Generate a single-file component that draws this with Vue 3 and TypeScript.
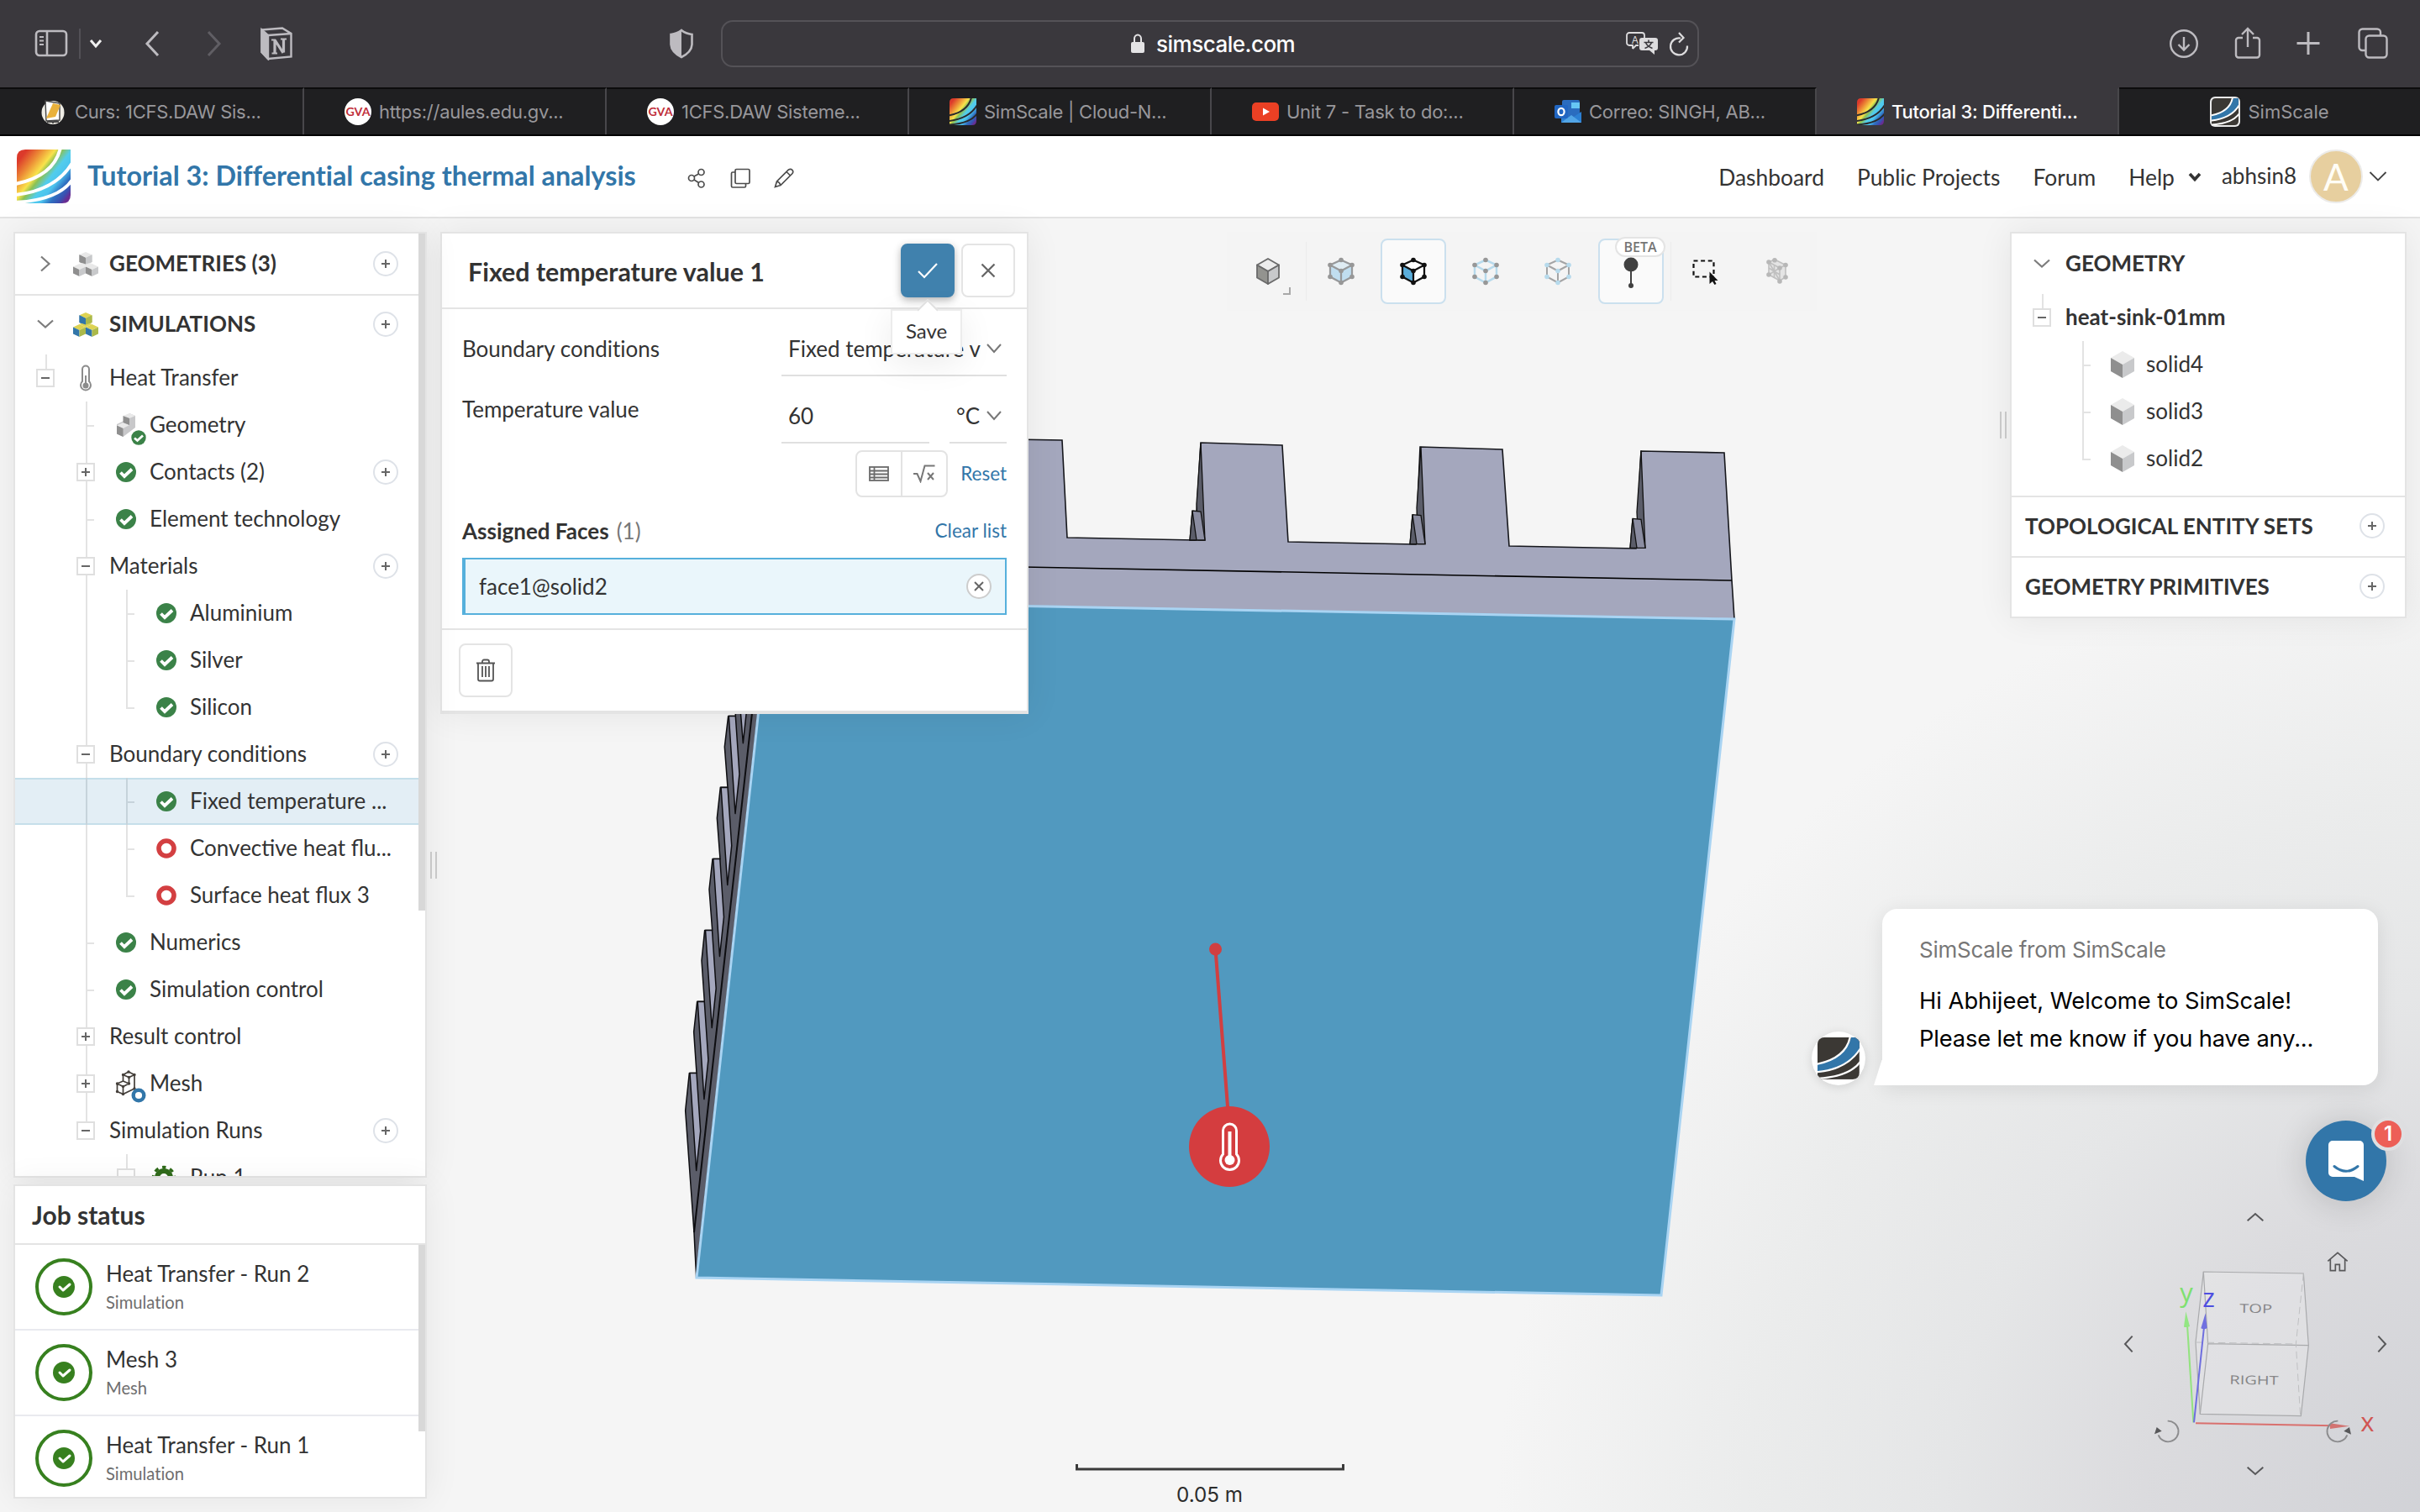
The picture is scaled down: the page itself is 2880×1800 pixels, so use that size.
<script setup lang="ts">
type Cell = '' | 'v' | 't' | 'e' | 'minus' | 'plus' | 'minus-end'

interface TreeRow {
  label: string
  cells: Cell[]
  icon?: string
  add?: boolean
  selected?: boolean
  ligatures?: boolean
}

interface Tab {
  title: string
  icon: string
  active?: boolean
  centered?: boolean
}

const tabs: Tab[] = [
  { title: 'Curs: 1CFS.DAW Sis...', icon: 'moodle' },
  { title: 'https://aules.edu.gv...', icon: 'gva' },
  { title: '1CFS.DAW Sisteme...', icon: 'gva' },
  { title: 'SimScale | Cloud-N...', icon: 'logo-tab' },
  { title: 'Unit 7 - Task to do:...', icon: 'youtube' },
  { title: 'Correo: SINGH, AB...', icon: 'outlook' },
  { title: 'Tutorial 3: Differenti...', icon: 'logo-tab', active: true },
  { title: 'SimScale', icon: 'logo-dark', centered: true },
]

const tree: TreeRow[] = [
  { label: 'Heat Transfer', cells: ['minus-end'], icon: 'thermo' },
  { label: 'Geometry', cells: ['', 't'], icon: 'geometry' },
  { label: 'Contacts (2)', cells: ['', 'plus'], icon: 'check', add: true },
  { label: 'Element technology', cells: ['', 't'], icon: 'check' },
  { label: 'Materials', cells: ['', 'minus'], add: true },
  { label: 'Aluminium', cells: ['', 'v', 't'], icon: 'check' },
  { label: 'Silver', cells: ['', 'v', 't'], icon: 'check' },
  { label: 'Silicon', cells: ['', 'v', 'e'], icon: 'check' },
  { label: 'Boundary conditions', cells: ['', 'minus'], add: true },
  { label: 'Fixed temperature ...', cells: ['', 'v', 't'], icon: 'check', selected: true },
  { label: 'Convective heat flu...', cells: ['', 'v', 't'], icon: 'open', ligatures: true },
  { label: 'Surface heat flux 3', cells: ['', 'v', 'e'], icon: 'open', ligatures: true },
  { label: 'Numerics', cells: ['', 't'], icon: 'check' },
  { label: 'Simulation control', cells: ['', 't'], icon: 'check' },
  { label: 'Result control', cells: ['', 'plus'] },
  { label: 'Mesh', cells: ['', 'plus'], icon: 'mesh' },
  { label: 'Simulation Runs', cells: ['', 'minus-end'], add: true },
  { label: 'Run 1', cells: ['', '', 'minus-end'], icon: 'gear' },
]

const solids: TreeRow[] = [
  { label: 'solid4', cells: ['', 't'], icon: 'solid' },
  { label: 'solid3', cells: ['', 't'], icon: 'solid' },
  { label: 'solid2', cells: ['', 'e'], icon: 'solid' },
]

const jobs = [
  { name: 'Heat Transfer - Run 2', kind: 'Simulation' },
  { name: 'Mesh 3', kind: 'Mesh' },
  { name: 'Heat Transfer - Run 1', kind: 'Simulation' },
]

const fins = [0, 1, 2, 3, 4, 5]
const nodes = [[32, 4], [58, 16], [58, 44], [32, 58], [6, 44], [6, 16], [32, 30]]
</script>

<template>
  <div class="screen">
    <svg class="defs" width="0" height="0" aria-hidden="true">
      <defs>
        <linearGradient id="rainbow" x1="0" y1="0.25" x2="0.95" y2="1">
          <stop offset="0" stop-color="#dc3a2b" />
          <stop offset="0.17" stop-color="#ec8a35" />
          <stop offset="0.34" stop-color="#f9e34b" />
          <stop offset="0.42" stop-color="#8cc152" />
          <stop offset="0.54" stop-color="#52cdec" />
          <stop offset="0.66" stop-color="#4cc3ee" />
          <stop offset="0.78" stop-color="#2f6fc0" />
          <stop offset="0.88" stop-color="#3a4fb0" />
          <stop offset="0.95" stop-color="#6a2c91" />
        </linearGradient>
        <radialGradient id="backdrop" gradientUnits="userSpaceOnUse" cx="2960" cy="1830" r="1180">
          <stop offset="0" stop-color="#cfd0d5" />
          <stop offset="0.35" stop-color="#dbdbde" />
          <stop offset="0.55" stop-color="#e5e6e7" />
          <stop offset="0.75" stop-color="#ebecec" />
          <stop offset="1" stop-color="#f5f5f5" />
        </radialGradient>
        <clipPath id="logo-clip"><path d="M10 0H64V54Q64 64 54 64H0V10Q0 0 10 0Z" /></clipPath>
      </defs>
      <symbol id="logo" viewBox="0 0 64 64">
        <g clip-path="url(#logo-clip)">
          <rect width="64" height="64" fill="url(#rainbow)" />
          <path d="M52 -2Q44 32 -2 41M66 16Q46 49 -2 54M66 36Q50 60 -2 63" fill="none" stroke="#fff" stroke-width="4" />
        </g>
      </symbol>
      <symbol id="logo-tab" viewBox="0 0 64 64">
        <g clip-path="url(#logo-clip)">
          <rect width="64" height="64" fill="url(#rainbow)" />
          <path d="M52 -2Q44 32 -2 41M66 16Q46 49 -2 54M66 36Q50 60 -2 63" fill="none" stroke="#2a2a2d" stroke-width="4" />
        </g>
      </symbol>
      <symbol id="logo-dark" viewBox="0 0 72 72">
        <rect width="72" height="72" rx="12" fill="#e8e8e8" />
        <g transform="translate(4 4)" clip-path="url(#logo-clip)">
          <rect width="64" height="64" fill="#3b3834" />
          <path d="M52 -2Q44 32 -2 41V54Q46 49 66 16V-2Z" fill="#3276a9" />
          <path d="M50 -2Q44 32 -2 41M66 16Q46 49 -2 53M66 36Q50 60 -2 63" fill="none" stroke="#fff" stroke-width="4" />
        </g>
      </symbol>
      <symbol id="moodle" viewBox="0 0 32 32">
        <ellipse cx="15" cy="17" rx="13.500" ry="14" fill="#eeece4" />
        <path d="M6 3L23 6V26L7 27Z" fill="#fff" stroke="#444" stroke-width="1.400" />
        <path d="M15 6L24 8L18 22L7 24Z" fill="#e9b13b" />
        <path d="M8 28h14M15 26v4" stroke="#4a4a4a" stroke-width="2" />
      </symbol>
      <symbol id="youtube" viewBox="0 0 32 32">
        <rect x="0" y="5" width="32" height="22" rx="5" fill="#eb4024" />
        <path d="M13 11.500V20.500L21 16Z" fill="#fff" />
      </symbol>
      <symbol id="outlook" viewBox="0 0 32 32">
        <rect x="9" y="2" width="21" height="20" rx="2" fill="#2a6cbf" />
        <rect x="20" y="5" width="10" height="7" fill="#66c6f4" />
        <path d="M8 17L20 24L32 16V29H8Z" fill="#2b7fd3" />
        <path d="M8 29L20 20L32 29Z" fill="#52a5e6" />
        <rect x="0" y="8" width="16" height="16" rx="2" fill="#2166c2" />
        <ellipse cx="8" cy="16" rx="3.600" ry="4.200" fill="none" stroke="#fff" stroke-width="2.200" />
      </symbol>

      <symbol id="cubes" viewBox="0 0 30 29">
        <path d="M15 0L22.500 3.200L15 7L7.500 3.200ZM7.500 14L15 17.500L7.500 21L0 17.500ZM22.500 14L30 17.500L22.500 21L15 17.500Z" fill="var(--top)" />
        <path d="M7.500 3.200L15 7V15L7.500 12ZM0 17.500L7.500 21V29L0 25.500ZM15 17.500L22.500 21V29L15 25.500Z" fill="var(--left)" />
        <path d="M22.500 3.200L15 7V15L22.500 12ZM15 17.500L7.500 21V29L15 25.500ZM30 17.500L22.500 21V29L30 25.500Z" fill="var(--right)" />
        <path d="M7.500 14L15 11L22.500 14L15 17.500Z" fill="var(--top)" />
        <path d="M7.500 3.200L15 7V14.500L7.500 12Z" fill="var(--left)" />
        <path d="M22.500 3.200L15 7V14.500L22.500 12Z" fill="var(--right)" />
      </symbol>
      <symbol id="thermo" viewBox="0 0 48 56">
        <path d="M20 32V17.500a4 4 0 0 1 8 0V32a6 6 0 1 1-8 0Z" fill="none" stroke="#8b8b8b" stroke-width="2" />
        <path d="M24 25V36" stroke="#8b8b8b" stroke-width="2" />
        <circle cx="24" cy="37" r="3.500" fill="#8b8b8b" />
      </symbol>
      <symbol id="check" viewBox="0 0 48 56">
        <circle cx="24" cy="28" r="12" fill="#3b8248" />
        <path d="M17.500 28.500L22 33L31 24.500" fill="none" stroke="#fff" stroke-width="3.800" />
      </symbol>
      <symbol id="open" viewBox="0 0 48 56">
        <circle cx="24" cy="28" r="9" fill="#fff" stroke="#d33f41" stroke-width="5.600" />
      </symbol>
      <symbol id="geometry" viewBox="0 0 48 56">
        <path d="M13 27L20.500 23.500L28 14L35 17V31L20.500 42L13 38.500Z" fill="#c8c8ca" />
        <path d="M28 14L35 17L28 20L20.500 17ZM20.500 25L28 28L20.500 32L13 28.500Z" fill="#e9e9e9" />
        <path d="M20.500 17L28 20V28L20.500 25ZM13 28.500L20.500 32V42L13 38.500Z" fill="#8f8f8f" />
        <circle cx="39" cy="43" r="8.700" fill="#3b8248" />
        <path d="M34 43.500L37.500 46.500L44 40.500" fill="none" stroke="#fff" stroke-width="2.800" />
      </symbol>
      <symbol id="mesh" viewBox="0 0 48 56">
        <path d="M20.500 17.500L27 14L34 17.500V34L20.500 40.500L13.500 37.500V28L20.500 25ZM20.500 17.500L27.500 20.500L34 17.500M27.500 20.500V28L20.500 31.500L13.500 28M20.500 31.500V40.500M20.500 25L27.500 28" fill="none" stroke="#443f3a" stroke-width="1.700" />
        <path d="M20.500 17.500h0M27 14h0M34 17.500h0M34 34h0M20.500 40.500h0M13.500 37.500h0M13.500 28h0M27.500 28h0M27.500 20.500h0M20.500 31.500h0" stroke="#443f3a" stroke-width="3.400" stroke-linecap="round" />
        <circle cx="39" cy="42" r="6.300" fill="#fff" stroke="#3276a9" stroke-width="4.400" />
      </symbol>
      <symbol id="gear" viewBox="0 0 48 56">
        <circle cx="21" cy="28" r="8" fill="none" stroke="#2f6b1a" stroke-width="6" />
        <circle cx="21" cy="28" r="12.500" fill="none" stroke="#2f6b1a" stroke-width="3.500" stroke-dasharray="4.900 4.917" stroke-dashoffset="2.450" transform="rotate(-90 21 28)" />
      </symbol>
      <symbol id="solid" viewBox="0 0 48 56">
        <path d="M24 12L38 20L24 28L10 20Z" fill="#ebebeb" />
        <path d="M10 20L24 28V44L10 36Z" fill="#8f8f8f" />
        <path d="M38 20L24 28V44L38 36Z" fill="#c8c9cb" />
      </symbol>
    </svg>

    <div class="browser-bar">
      <div class="bar-left">
        <svg class="i-sidebar" width="40" height="34" viewBox="0 0 40 34" fill="none" stroke="#bdbbc0" stroke-width="2.600">
          <rect x="2" y="2" width="36" height="29" rx="4" />
          <path d="M15 2V31" /><path d="M6 9h5M6 13.500h5M6 18h5" stroke-width="2" />
        </svg>
        <span class="bar-sep"></span>
        <svg class="i-drop" width="16" height="12" viewBox="0 0 16 12" fill="none" stroke="#f0f0f0" stroke-width="3"><path d="M2 2L8 9L14 2" /></svg>
        <svg class="i-back" width="20" height="32" viewBox="0 0 20 32" fill="none" stroke="#bdbbc0" stroke-width="3"><path d="M17 2L4 16L17 30" /></svg>
        <svg class="i-fwd" width="20" height="32" viewBox="0 0 20 32" fill="none" stroke="#605e64" stroke-width="3"><path d="M3 2L16 16L3 30" /></svg>
        <svg class="i-notion" width="38" height="40" viewBox="0 0 38 40" fill="none" stroke="#bdbbc0" stroke-width="2.400">
          <path d="M1.500 3.500L26 1.500L36.500 8V35.500L9 38L1.500 30Z" />
          <path d="M1.500 3.500L9 10V38L1.500 30Z" fill="#bdbbc0" />
          <path d="M9 10L36.500 8" />
          <path d="M17 15.500V31.500M17 15.500L27 31M27.500 14.500V30.500" stroke-width="3.200" />
          <path d="M13 15.500H18M13.500 31.500H20M24 14.500H31" stroke-width="1.800" />
        </svg>
      </div>
      <svg class="i-shield" width="30" height="36" viewBox="0 0 30 36">
        <path d="M15 2Q20 6 27.500 7V19Q27 28 15 34Q3 28 2.500 19V7Q10 6 15 2Z" fill="none" stroke="#bdbbc0" stroke-width="2.600" />
        <path d="M15 2V34Q3 28 2.500 19V7Q10 6 15 2Z" fill="#bdbbc0" />
      </svg>
      <div class="address">
        <div class="address-text">
          <svg width="18" height="26" viewBox="0 0 18 26"><path d="M5 11V7a4 4.500 0 0 1 8 0V11" fill="none" stroke="#e4e3e5" stroke-width="2" /><rect x="1" y="11" width="16" height="13" rx="2" fill="#e4e3e5" /></svg>
          <span>simscale.com</span>
        </div>
        <svg class="i-translate" width="40" height="30" viewBox="0 0 40 30">
          <path d="M4 2H19a3 3 0 0 1 3 3V9M8 21V17H4a3 3 0 0 1-3-3V5a3 3 0 0 1 3-3M8 21l4-4h3" fill="none" stroke="#dddcde" stroke-width="1.800" />
          <text x="11" y="14.500" text-anchor="middle" font-family="Inter, sans-serif" font-size="12" fill="#dddcde">A</text>
          <path d="M19 8H35a3 3 0 0 1 3 3V20a3 3 0 0 1-3 3H34V28L28 23H19a3 3 0 0 1-3-3V11a3 3 0 0 1 3-3Z" fill="#dddcde" />
          <path d="M27 10.500V13M21.500 13.500H32.500M30.500 13.500Q29 18 22.500 20.500M23.500 13.500Q25 18 31.500 20.500" fill="none" stroke="#3a383d" stroke-width="1.600" />
        </svg>
        <svg class="i-reload" width="24" height="30" viewBox="0 0 24 30" fill="none" stroke="#dddcde" stroke-width="2.200"><path d="M14 8.500A10 10 0 1 0 22 17.500" /><path d="M12 2L17.500 8L12 13.500" /></svg>
      </div>
      <div class="bar-right">
        <svg width="36" height="40" viewBox="0 0 36 40" fill="none" stroke="#bdbbc0" stroke-width="2.400"><circle cx="18" cy="20" r="15.800" /><path d="M18 12V27M11.500 21L18 27.500L24.500 21" /></svg>
        <svg width="32" height="40" viewBox="0 0 32 40" fill="none" stroke="#bdbbc0" stroke-width="2.400"><path d="M10 13H5a3 3 0 0 0-3 3V33.500a3 3 0 0 0 3 3H27a3 3 0 0 0 3-3V16a3 3 0 0 0-3-3H22M16 24V3M9 9L16 2L23 9" /></svg>
        <svg width="28" height="40" viewBox="0 0 28 40" fill="none" stroke="#bdbbc0" stroke-width="3"><path d="M14 6V33M.5 19.500H27.500" /></svg>
        <svg class="i-tabs" width="36" height="40" viewBox="0 0 36 40" fill="none" stroke="#bdbbc0" stroke-width="2.400"><rect x="9.500" y="10.500" width="25" height="26" rx="4" /><path d="M9.500 28H5.500a4 4 0 0 1-4-4V6.500a4 4 0 0 1 4-4H23a4 4 0 0 1 4 4V10.500" /></svg>
      </div>
    </div>

    <div class="tabs">
      <div v-for="tab in tabs" :key="tab.title" class="tab" :class="{ active: tab.active, centered: tab.centered }">
        <svg v-if="tab.icon === 'gva'" class="favicon" viewBox="0 0 32 32">
          <circle cx="16" cy="16" r="16" fill="#fff" />
          <text x="1.500" y="21" font-family="Lato, sans-serif" font-weight="700" font-size="14" letter-spacing="0" fill="#bf2f3b" textLength="29" lengthAdjust="spacingAndGlyphs">GVA</text>
        </svg>
        <svg v-else class="favicon"><use :href="'#' + tab.icon" /></svg>
        <span>{{ tab.title }}</span>
      </div>
    </div>

    <header class="app-header">
      <svg class="app-logo" width="64" height="64"><use href="#logo" /></svg>
      <h1>Tutorial 3: Differential casing thermal analysis</h1>
      <div class="title-actions">
        <svg width="24" height="24" viewBox="0 0 24 24" fill="none" stroke="#4c4c4c" stroke-width="1.700"><circle cx="6" cy="12" r="3.500" /><circle cx="17.500" cy="5" r="3.500" /><circle cx="17.500" cy="19.500" r="3.500" /><path d="M9 10L14.500 7M9 14L14.500 17.500" /></svg>
        <svg width="24" height="24" viewBox="0 0 24 24" fill="none" stroke="#4c4c4c" stroke-width="1.700"><rect x="6" y="1.500" width="17" height="17" rx="1.500" /><path d="M6 5H3A1.500 1.500 0 0 0 1.500 6.500V21.500A1.500 1.500 0 0 0 3 23H17A1.500 1.500 0 0 0 18.500 21.500V18.500" /></svg>
        <svg width="24" height="24" viewBox="0 0 24 24" fill="none" stroke="#4c4c4c" stroke-width="1.700"><path d="M1.500 22.500L3.500 16L17.500 2Q20 .5 22 2.500Q23.500 4.500 22 6.500L8 20.500ZM15 4.500L19.500 9M3.500 16Q6.500 16.500 8 20.500" /></svg>
      </div>
      <nav>
        <span>Dashboard</span><span>Public Projects</span><span>Forum</span>
        <span class="help">Help <svg width="16" height="12" viewBox="0 0 16 12" fill="none" stroke="#333" stroke-width="3.600"><path d="M2 2L8 8.500L14 2" /></svg></span>
      </nav>
      <div class="user">
        <span class="user-name">abhsin8</span>
        <span class="avatar">A</span>
        <svg width="22" height="14" viewBox="0 0 22 14" fill="none" stroke="#444" stroke-width="1.800"><path d="M1.500 2L11 11.500L20.500 2" /></svg>
      </div>
    </header>

    <main class="workspace">
      <svg class="viewport" viewBox="0 260 2880 1540" width="2880" height="1540">
        <rect y="260" width="2880" height="1540" fill="#f5f5f5" />
        <rect y="260" width="2880" height="1540" fill="url(#backdrop)" />

        <!-- heat sink body -->
        <path d="M900 518L1264 524L1270 640L1422 643L1429 527L1526 530L1533 645L1685 648L1690 532L1788 535L1796 650L1947 653L1953 537L2052 539L2061 691L2064 737L900 718Z" fill="#a4a7bd" stroke="#16171c" stroke-width="1.600" />
        <path d="M900 669L2061 691" stroke="#000" stroke-width="1.600" />
        <g v-for="x in [0, 262, 524]" :key="x" :transform="`translate(${x} ${x * 0.018})`" stroke="#111" stroke-width="1.300">
          <path d="M1429 527L1434 643H1426L1424 600Z" fill="#5b5d69" />
          <path d="M1419 608L1429 609L1434 643L1416 643Z" fill="#8b8da1" />
          <path d="M1419 608L1424 643H1416Z" fill="#5b5d69" />
        </g>

        <!-- fins along the left edge -->
        <g transform="translate(780 840) scale(0.33333 0.44643)" stroke="#0d0d10" stroke-width="1.500" stroke-linejoin="round">
          <path vector-effect="non-scaling-stroke" fill="#5b5d69" d="M285 -20L286 28H260L247 110L258 218H232L220 300L231 409H204L192 490L203 599H176L165 680L175 789H149L137 870L147 980H121L107 1080L138 1405L146 1525L372 -20Z" />
          <g v-for="n in fins" :key="n" :transform="`translate(${n * 27.8} ${n * -190.4})`">
            <path vector-effect="non-scaling-stroke" fill="#a4a7bd" d="M123 980H147L161 1135L146 1240Z" />
          </g>
          <path vector-effect="non-scaling-stroke" fill="#a4a7bd" d="M300 -20H320L326 10L313 100Z" />
          <path vector-effect="non-scaling-stroke" fill="none" stroke-width="2" d="M138 1405L351 -20" />
        </g>

        <path d="M917 716L2064 737L1977 1542L829 1521Z" fill="#5199bf" stroke="#a9d4f3" stroke-width="3" />

        <!-- temperature probe -->
        <path d="M1446.500 1130L1462 1330" stroke="#d13f41" stroke-width="4" />
        <circle cx="1446.500" cy="1130" r="7.500" fill="#d13f41" />
        <circle cx="1463" cy="1365" r="48" fill="#d43d3f" />
        <path d="M1455.500 1374V1346a8 8 0 0 1 16 0V1374a11 11 0 1 1-16 0Z" fill="none" stroke="#fff" stroke-width="3" />
        <path d="M1463.500 1347V1380" stroke="#fff" stroke-width="4" />
        <circle cx="1463.500" cy="1381" r="6" fill="#fff" />

        <!-- scale bar -->
        <path d="M1281.500 1743V1749H1598.500V1743" fill="none" stroke="#3a3a3a" stroke-width="3" />
        <text x="1439.500" y="1788" text-anchor="middle" font-family="Inter, sans-serif" font-size="24.200" fill="#2c2c2c">0.05 m</text>

        <!-- orientation cube -->
        <g transform="translate(2480 1400) scale(0.33333)" fill="none" stroke-width="3.600">
          <path d="M427 342L784 348L802 605L775 857L415 850L399 594Z" fill="#ffffff" fill-opacity="0.180" stroke="#a9aaac" />
          <path d="M427 342L443 599L415 850M443 599L802 605" stroke="#a9aaac" />
          <path d="M784 348L757 600L773 857M399 594L757 600" stroke="#bfc0c2" stroke-dasharray="26 14" stroke-width="3" />
          <path d="M391 880L369 530" stroke="#93e37f" stroke-width="6" />
          <path d="M364 484L378 537Q367 542 357 539Z" fill="#93e683" />
          <path d="M393 880L429 540" stroke="#6e6edf" stroke-width="6" />
          <path d="M434 490L440 543Q430 550 418 544Z" fill="#7070e0" />
          <path d="M399 883L890 892" stroke="#d9706e" stroke-width="6" />
          <path d="M948 893L879 903V883Z" fill="#d27371" />
          <g font-family="'Open Sans', sans-serif" font-size="93" font-weight="500" stroke="none">
            <text x="343" y="450" fill="#7fe070">y</text>
            <text x="424" y="468" fill="#4e4ee0">z</text>
            <text x="988" y="911" fill="#d05552">x</text>
          </g>
          <g font-family="'Open Sans', sans-serif" fill="#858587" stroke="none">
            <text transform="translate(556 488) rotate(1)" font-size="44" textLength="116" lengthAdjust="spacingAndGlyphs">TOP</text>
            <text transform="translate(520 743) rotate(1)" font-size="44" textLength="175" lengthAdjust="spacingAndGlyphs">RIGHT</text>
          </g>
          <g stroke="#58585a" stroke-width="6">
            <path d="M584 160L612 135L640 160M584 1040L612 1065L640 1040M173 572L147 600L173 628M1051 572L1077 600L1051 628" />
            <path d="M871 304L906 274L941 304M880 298V338H898V316H913V338H932V298" stroke-width="5" />
          </g>
          <path d="M299 875A37 37 0 1 1 266 925M907 875A37 37 0 1 0 940 925" stroke="#8c8c8e" stroke-width="5.500" />
          <path d="M260 897L278 911L252 922ZM948 897L928 911L954 923Z" fill="#58585a" />
        </g>
      </svg>

      <div class="overlay">
        <div class="left-column">
          <section class="panel tree-panel">
            <div class="scroll-area">
              <div class="tree-head first">
                <span class="cell"><svg width="14" height="20" viewBox="0 0 14 20" fill="none" stroke="#7d7d7d" stroke-width="2.200"><path d="M2 1.500L11.500 10L2 18.500" /></svg></span>
                <span class="cell"><svg class="cubes gray" width="30" height="29"><use href="#cubes" /></svg></span>
                <b>GEOMETRIES (3)</b><span class="add"></span>
              </div>
              <div class="tree-head">
                <span class="cell"><svg width="20" height="12" viewBox="0 0 20 12" fill="none" stroke="#7d7d7d" stroke-width="2.200"><path d="M1 1.500L10 9.500L19 1.500" /></svg></span>
                <span class="cell"><svg class="cubes vivid" width="30" height="29"><use href="#cubes" /></svg></span>
                <b>SIMULATIONS</b><span class="add"></span>
              </div>
              <div v-for="row in tree" :key="row.label" class="tree-row" :class="{ selected: row.selected }">
                <span v-for="(c, i) in row.cells" :key="i" class="cell" :class="c && 'g-' + c"><i v-if="c === 'plus' || c.startsWith('minus')" class="toggle" :class="c"></i></span>
                <svg v-if="row.icon" class="row-icon"><use :href="'#' + row.icon" /></svg>
                <span class="row-label" :class="{ ligatures: row.ligatures }">{{ row.label }}</span>
                <span v-if="row.add" class="add"></span>
              </div>
            </div>
            <span class="scrollbar tree-bar"></span>
          </section>

          <section class="panel jobs-panel">
            <h2>Job status</h2>
            <div v-for="job in jobs" :key="job.name" class="job">
              <svg width="68" height="68" viewBox="0 0 68 68">
                <circle cx="34" cy="34" r="32" fill="none" stroke="#37801f" stroke-width="4" />
                <circle cx="34" cy="34" r="13" fill="#37801f" />
                <path d="M29 34L33 38L41 31" fill="none" stroke="#fff" stroke-width="3" stroke-linecap="round" stroke-linejoin="round" />
              </svg>
              <div><p>{{ job.name }}</p><small>{{ job.kind }}</small></div>
            </div>
            <span class="scrollbar job-bar"></span>
          </section>
        </div>
        <span class="grip left-grip"></span>

        <section class="panel form-panel">
          <div class="form-head">
            <h2>Fixed temperature value 1</h2>
            <button class="save"><svg width="26" height="22" viewBox="0 0 26 22" fill="none" stroke="#fff" stroke-width="2.200"><path d="M2 12L9 19L24 3" /></svg>
              <span class="tooltip">Save</span>
            </button>
            <button class="close"><svg width="18" height="18" viewBox="0 0 18 18" fill="none" stroke="#666" stroke-width="2.300"><path d="M1.500 1.500L16.500 16.500M16.500 1.500L1.500 16.500" /></svg></button>
          </div>
          <div class="form-body">
            <div class="field">
              <label class="low">Boundary conditions</label>
              <div class="input wide low"><span class="clip">Fixed temperature v</span><svg class="chev" viewBox="0 0 18 12"><path d="M1 1L9 10L17 1" /></svg></div>
            </div>
            <div class="field">
              <label>Temperature value</label>
              <div class="input number">60</div>
              <div class="input unit"><span>°C</span><svg class="chev" viewBox="0 0 18 12"><path d="M1 1L9 10L17 1" /></svg></div>
            </div>
            <div class="tools">
              <div class="tool-group">
                <span><svg width="24" height="18" viewBox="0 0 24 18" fill="none" stroke="#6b6b6b" stroke-width="1.800"><rect x="1" y="1" width="22" height="16" /><path d="M1 5.500H23M1 9.500H23M1 13.500H23M6.500 1V17" /></svg></span>
                <span><svg width="26" height="22" viewBox="0 0 26 22" fill="none" stroke="#777" stroke-width="2"><path d="M0 11H4.500L8.500 20L13.500 1.500H25.500M17 10L24 18M24 10L17 18" /></svg></span>
              </div>
              <a>Reset</a>
            </div>
            <div class="assigned"><b>Assigned Faces</b><span>(1)</span><a>Clear list</a></div>
            <div class="face">face1@solid2<span class="face-x"><svg width="14" height="14" viewBox="0 0 14 14" fill="none" stroke="#666" stroke-width="2"><path d="M2 2L12 12M12 2L2 12" /></svg></span></div>
          </div>
          <div class="form-foot">
            <button><svg width="24" height="28" viewBox="0 0 24 28" fill="none" stroke="#555" stroke-width="1.800"><path d="M1 5.500H23M3 5.500V24.500a2 2 0 0 0 2 2H19a2 2 0 0 0 2-2V5.500M8 5V3.500a2 2 0 0 1 2-2H14a2 2 0 0 1 2 2V5M8 9V22M12 9V22M16 9V22" /></svg></button>
          </div>
        </section>

        <div class="toolbar">
          <span class="tool first">
            <svg width="28" height="32" viewBox="0 0 28 32" stroke="#6a6a6a" stroke-width="1.800" stroke-linejoin="round"><path d="M14 1L27 8.500L14 16L1 8.500Z" fill="#ececec" /><path d="M1 8.500L14 16V31L1 23.500Z" fill="#93938f" /><path d="M27 8.500L14 16V31L27 23.500Z" fill="#c8c9cb" /></svg>
            <i class="corner"></i>
          </span>
          <span class="sep"></span>
          <span class="tool"><svg width="32" height="34" viewBox="0 0 64 62"><path d="M32 4L58 16V44L32 58L6 44V16Z" fill="#c0def0" /><path d="M32 4L58 16L32 30L6 16Z" fill="#dfecf3" /><path d="M32 4L58 16V44L32 58L6 44V16ZM6 16L32 30L58 16M32 30V58" fill="none" stroke="#97999b" stroke-width="4.500" /><circle v-for="(n, i) in nodes" :key="i" :cx="n[0]" :cy="n[1]" r="5.600" fill="#979797" /></svg></span>
          <span class="tool on"><svg width="32" height="34" viewBox="0 0 64 62"><path d="M32 4L58 16V44L32 58L6 44V16Z" fill="#fff" /><path d="M6 16L32 30V58L6 44Z" fill="#5aaddb" /><path d="M32 4L58 16V44L32 58L6 44V16ZM6 16L32 30L58 16M32 30V58" fill="none" stroke="#111" stroke-width="4.500" /><circle v-for="(n, i) in nodes" :key="i" :cx="n[0]" :cy="n[1]" r="5.600" fill="#111" /></svg></span>
          <span class="tool"><svg width="32" height="34" viewBox="0 0 64 62"><path d="M32 4L58 16V44L32 58L6 44V16ZM6 16L32 30L58 16M32 30V58" fill="none" stroke="#b7daec" stroke-width="5" /><circle v-for="(n, i) in nodes" :key="i" :cx="n[0]" :cy="n[1]" r="5.600" fill="#979797" /></svg></span>
          <span class="tool"><svg width="32" height="34" viewBox="0 0 64 62"><path d="M32 4L58 16V44L32 58L6 44V16ZM6 16L32 30L58 16M32 30V58" fill="none" stroke="#a3a4a5" stroke-width="4" /><circle v-for="(n, i) in nodes" :key="i" :cx="n[0]" :cy="n[1]" r="5.600" fill="#b7daec" /></svg></span>
          <span class="tool on probe">
            <svg width="18" height="38" viewBox="0 0 18 38"><circle cx="9" cy="9" r="8.500" fill="#404040" /><path d="M9 15V34" stroke="#404040" stroke-width="2" /><circle cx="9" cy="34" r="3" fill="#404040" /></svg>
            <em>BETA</em>
          </span>
          <span class="sep late"></span>
          <span class="tool"><svg width="32" height="32" viewBox="0 0 32 32"><rect x="2.500" y="3.500" width="24" height="19" fill="none" stroke="#111" stroke-width="2.200" stroke-dasharray="5 3.600" /><path d="M21.500 16.500V31L25 28L27.500 32L29.500 31L27.500 27H31.500Z" fill="#111" /></svg></span>
          <span class="sep tail"></span>
          <span class="tool"><svg width="26" height="32" viewBox="0 0 26 32" fill="none" stroke="#c0c0c0" stroke-width="1.600"><path d="M3 5L10 2L23 8.500V23L16 27L3 20Z" fill="#e4e4e4" /><path d="M3 5L16 12V27M16 12L23 8.500M3 20L16 12M3 12L16 20M9.500 8V24M3 5L16 27" /><g fill="#b7b7b7" stroke="none"><circle cx="3" cy="5" r="2.800" /><circle cx="10" cy="2.800" r="2.800" /><circle cx="23" cy="8.500" r="2.800" /><circle cx="23" cy="23" r="2.800" /><circle cx="16" cy="28" r="2.800" /><circle cx="3" cy="20" r="2.800" /><circle cx="16" cy="12" r="2.800" /></g></svg></span>
        </div>

        <span class="grip right-grip"></span>
        <section class="panel scene-panel">
          <div class="scene-head"><span class="cell"><svg width="20" height="12" viewBox="0 0 20 12" fill="none" stroke="#7d7d7d" stroke-width="2.200"><path d="M1 1.500L10 9.500L19 1.500" /></svg></span><b>GEOMETRY</b></div>
          <div class="tree-row"><span class="cell g-minus-end"><i class="toggle minus"></i></span><b class="row-label">heat-sink-01mm</b></div>
          <div v-for="row in solids" :key="row.label" class="tree-row">
            <span v-for="(c, i) in row.cells" :key="i" class="cell" :class="c && 'g-' + c"></span>
            <svg class="row-icon"><use href="#solid" /></svg>
            <span class="row-label">{{ row.label }}</span>
          </div>
          <div class="scene-section gap"><b>TOPOLOGICAL ENTITY SETS</b><span class="add"></span></div>
          <div class="scene-section"><b>GEOMETRY PRIMITIVES</b><span class="add"></span></div>
        </section>
      </div>

      <div class="chat">
        <svg class="chat-avatar" width="64" height="64" viewBox="0 0 64 64">
          <circle cx="32" cy="32" r="32" fill="#fff" />
          <g transform="translate(7 7) scale(0.78)" clip-path="url(#logo-clip)">
            <rect width="64" height="64" fill="#3b3834" />
            <path d="M52 -2Q44 32 -2 41V54Q46 49 66 16V-2Z" fill="#3276a9" />
            <path d="M50 -2Q44 32 -2 41M66 16Q46 49 -2 53M66 36Q50 60 -2 63" fill="none" stroke="#fff" stroke-width="3" />
          </g>
        </svg>
        <div class="chat-card">
          <svg class="tail" width="20" height="30" viewBox="0 0 20 30"><path d="M9.500 0L0 30H20V0Z" fill="#fff" /></svg>
          <p class="from">SimScale from SimScale</p>
          <p class="msg first-line">Hi Abhijeet, Welcome to SimScale!</p>
          <p class="msg second-line">Please let me know if you have any...</p>
        </div>
      </div>
      <div class="launcher">
        <svg width="42" height="50" viewBox="0 0 42 50"><path d="M5 1H37a5 5 0 0 1 5 5V49L31 44H5a5 5 0 0 1-5-5V6A5 5 0 0 1 5 1Z" fill="#fff" /><path d="M7 31.500Q21 43 35 31.500" fill="none" stroke="#3276a9" stroke-width="3" stroke-linecap="round" /></svg>
        <span class="badge">1</span>
      </div>
    </main>
  </div>
</template>

<style>
html, body { margin: 0; background: #f5f5f5; }
</style>

<style scoped>
* { box-sizing: border-box; }
.screen { width: 2880px; height: 1800px; display: flex; flex-direction: column; overflow: hidden; font-family: Lato, sans-serif; font-size: 26px; color: #333; font-variant-ligatures: none; }
.ligatures { font-variant-ligatures: normal; }
.defs { position: absolute; }
svg { display: block; flex: none; }
p, h1, h2 { margin: 0; }

.browser-bar { height: 104px; flex: none; background: #3a383d; display: flex; align-items: center; }
.bar-left { width: 796px; display: flex; align-items: center; padding-left: 41px; }
.bar-sep { width: 2px; height: 36px; background: #525056; margin-left: 13px; }
.i-drop { margin-left: 10px; }
.i-back { margin-left: 49px; }
.i-fwd { margin-left: 54px; }
.i-notion { margin-left: 45px; }
.address { width: 1164px; height: 56px; margin-left: 32px; border: 2px solid #545257; border-radius: 14px; display: flex; align-items: center; }
.address-text { display: flex; align-items: center; gap: 13px; margin-left: 485px; color: #fff; font: 500 26px Inter, sans-serif; letter-spacing: -0.5px; }
.i-translate { margin-left: auto; }
.i-reload { margin: 0 10px 0 11px; }
.bar-right { display: flex; align-items: center; gap: 42px; margin: 0 38px 0 auto; }
.i-tabs { margin-left: 3px; }

.tabs { height: 58px; flex: none; display: flex; background: #1f1f21; border-bottom: 2px solid #000; }
.tab { width: 360px; display: flex; align-items: center; gap: 9px; padding-left: 48px; border-top: 2px solid #0c0c0d; border-right: 2px solid #48474b; color: #98979b; font: 400 22px Inter, sans-serif; letter-spacing: -0.25px; white-space: nowrap; }
.tab:first-child { width: 362px; }
.tab.active { background: #3a383d; border-top-color: #3a383d; color: #fff; font-weight: 500; letter-spacing: -0.25px; }
.tab.centered { flex: 1; padding: 0; justify-content: center; border-right: 0; letter-spacing: 0; }
.favicon { width: 32px; height: 32px; }
.centered .favicon { width: 36px; height: 36px; }

.app-header { height: 98px; flex: none; background: #fff; border-bottom: 2px solid #e3e3e3; display: flex; align-items: center; padding: 0 39px 0 20px; }
h1 { width: 655px; margin-left: 20px; font-size: 32.300px; font-weight: 700; color: #3276a9; line-height: 40px; padding-bottom: 2px; white-space: nowrap; }
.title-actions { display: flex; gap: 28px; margin-left: 58px; padding-top: 3px; }
nav { display: flex; gap: 39px; margin-left: auto; padding-top: 2px; font-size: 26.400px; }
.help { display: flex; align-items: center; gap: 16px; }
.user { display: flex; align-items: center; margin-left: 24px; }
.user-name { padding-bottom: 2px; }
.avatar { width: 64px; height: 64px; margin: 0 7px 0 15px; border: 2px solid #ecebe9; border-radius: 50%; background: #e7cf9f; color: #fffdf6; font-size: 44px; line-height: 60px; text-align: center; }

.workspace { position: relative; height: 1540px; }
.viewport { position: absolute; inset: 0; }
.overlay { position: relative; display: flex; align-items: flex-start; padding: 16px 16px 0; }
.panel { background: #fff; border: 2px solid #e4e4e4; box-shadow: 0 0 40px rgba(0, 0, 0, 0.07); }
.left-column { width: 492px; display: flex; flex-direction: column; gap: 8px; }
.tree-panel { position: relative; height: 1126px; overflow: hidden; }
.tree-head { display: flex; align-items: center; height: 70px; padding: 0 32px 2px 12px; }
.tree-head.first { height: 74px; border-bottom: 2px solid #e4e4e4; padding-bottom: 0; }
.tree-head b { margin-left: 4px; padding-bottom: 2px; }
.cell { position: relative; width: 48px; align-self: stretch; flex: none; display: flex; align-items: center; justify-content: center; }
.cubes.gray { --top: #e8e8e8; --left: #8f8f8f; --right: #c8c9cb; }
.cubes.vivid { --top: #ddd353; --left: #3276a9; --right: #abb94a; }
.tree-row { display: flex; align-items: center; height: 56px; padding: 0 32px 0 12px; }
.tree-row.selected { background: linear-gradient(#c5dfea, #c5dfea) top / 100% 2px no-repeat, linear-gradient(#c5dfea, #c5dfea) bottom / 100% 2px no-repeat, #e3eef5; }
.g-v::before, .g-t::before, .g-plus::before, .g-minus::before { content: ''; position: absolute; left: 24px; top: 0; bottom: 0; width: 2px; background: #e3e3e3; }
.g-e::before, .g-minus-end::before { content: ''; position: absolute; left: 24px; top: 0; height: 30px; width: 2px; background: #e3e3e3; }
.g-t::after, .g-e::after { content: ''; position: absolute; left: 26px; top: 28px; width: 8px; height: 2px; background: #e3e3e3; }
.selected .cell::before, .selected .cell::after { background: #c6d3db; }
.toggle { position: relative; width: 22px; height: 22px; border: 2px solid #dfdfdf; background: linear-gradient(#666, #666) center / 10px 2px no-repeat, #fff; }
.toggle.plus { background: linear-gradient(#666, #666) center / 10px 2px no-repeat, linear-gradient(#666, #666) center / 2px 10px no-repeat, #fff; }
.row-icon { width: 48px; height: 56px; }
.row-label { margin-left: 4px; padding-bottom: 2px; white-space: nowrap; }
.add { width: 30px; height: 30px; margin-left: auto; flex: none; border: 2px solid #dee2e8; border-radius: 50%; background: linear-gradient(#666, #666) center / 10px 2px no-repeat, linear-gradient(#666, #666) center / 2px 10px no-repeat, #fff; }
.scrollbar { position: absolute; right: 0; width: 8px; background: #d8d8d8; }
.tree-bar { top: 0; height: 806px; }

.jobs-panel { position: relative; height: 374px; overflow: hidden; }
.jobs-panel h2 { height: 70px; padding: 0 20px 0; border-bottom: 2px solid #e4e4e4; font-size: 30px; line-height: 68px; }
.job { display: flex; align-items: center; gap: 16px; height: 102px; padding-left: 24px; border-bottom: 2px solid #e9eaef; }
.job p { line-height: 34px; margin-top: -1px; }
.job small { display: block; font-size: 20.200px; line-height: 30px; color: #6e6e6e; margin-top: 2px; }
.job-bar { top: 70px; height: 222px; }

.grip { width: 8px; height: 32px; flex: none; border: solid #cdcdcd; border-width: 0 2px; }
.left-grip { margin: 738px 4px 0; }
.right-grip { margin: 214px 4px 0 auto; }

.form-panel { width: 700px; border-bottom-width: 4px; }
.form-head { position: relative; z-index: 1; height: 90px; display: flex; align-items: center; gap: 8px; padding: 0 14px 0 31px; border-bottom: 2px solid #e4e4e4; }
.form-head h2 { flex: 1; font-size: 30.400px; padding-top: 1px; }
button { position: relative; width: 64px; height: 64px; padding: 0; border: 2px solid #e4e4e4; border-radius: 8px; background: #fff; display: flex; align-items: center; justify-content: center; font: inherit; color: inherit; }
button.save { background: #4081ad; border-color: #4081ad; box-shadow: 0 3px 10px rgba(0, 0, 0, 0.3); }
.tooltip { position: absolute; top: 76px; left: -14px; width: 85px; height: 54px; border: 2px solid #ececec; background: #fff; font-size: 24px; line-height: 48px; text-align: center; box-shadow: 0 10px 40px rgba(0, 0, 0, 0.08); }
.tooltip::before { content: ''; position: absolute; left: 33px; top: -10px; width: 16px; height: 16px; background: #fff; border: solid #e0e0e0; border-width: 2px 0 0 2px; transform: rotate(45deg); }
.form-body { padding: 0 24px 16px; border-bottom: 2px solid #e4e4e4; }
.field { display: flex; height: 80px; }
label { flex: 1; line-height: 79px; }
.input { height: 80px; padding: 16px 6px 0 8px; border-bottom: 2px solid #e0e0e0; display: flex; align-items: center; justify-content: space-between; }
.input.low { padding-top: 15px; }
.field label.low { padding-top: 8px; }
.wide { width: 268px; }
.number { width: 176px; }
.unit { width: 68px; margin-left: 24px; }
.clip { white-space: nowrap; }
.chev { width: 18px; height: 12px; fill: none; stroke: #777; stroke-width: 2; }
.tools { display: flex; justify-content: flex-end; align-items: center; height: 56px; margin-top: 8px; }
.tool-group { display: flex; width: 110px; height: 56px; border: 2px solid #e3e3e3; border-radius: 8px; margin-right: 15px; }
.tool-group span { flex: 1; display: flex; align-items: center; justify-content: center; }
.tool-group span:first-child { border-right: 2px solid #e3e3e3; }
a { color: #3276a9; font-size: 22.500px; padding-bottom: 1px; }
.assigned { display: flex; align-items: center; height: 72px; padding-top: 7px; }
.assigned span { margin-left: 9px; color: #777; }
.assigned a { margin-left: auto; }
.face { display: flex; align-items: center; justify-content: space-between; height: 68px; padding: 0 16px; border: 2px solid #56b0dc; border-left-width: 4px; background: #eaf6fb; }
.face-x { width: 30px; height: 30px; border: 2px solid #cdcdcd; border-radius: 50%; background: #fff; display: flex; align-items: center; justify-content: center; }
.form-foot { height: 96px; padding: 16px 20px; }

.toolbar { display: flex; align-items: center; height: 94px; margin: 0 0 0 236px; background: rgba(243, 243, 243, 0.5); }
.tool { position: relative; width: 78px; height: 78px; margin-right: 8px; display: flex; align-items: center; justify-content: center; }
.tool.first { margin: 0 6px 0 10px; }
.tool.on { border: 2px solid #cbe0ee; border-radius: 8px; background: #fafafa; }
.tool.probe { margin-left: 1px; }
.probe svg { margin-top: 4px; }
.sep { width: 1px; height: 70px; margin-right: 2px; background: #ececec; }
.sep.late { margin: 0 1px 0 0; }
.sep.tail { margin: 0 0 0 -6px; }
.corner { position: absolute; right: 12px; bottom: 11px; width: 9px; height: 9px; border: solid #a8a8a8; border-width: 0 2px 2px 0; }
em { position: absolute; top: -4px; left: 18px; width: 60px; height: 24px; border: 2px solid #e4e4e4; border-radius: 12px; background: #fff; color: #757575; font: normal 600 16px/20px 'Open Sans', sans-serif; text-align: center; }

.scene-panel { width: 472px; height: 460px; }
.scene-head { display: flex; height: 72px; align-items: center; padding-left: 12px; }
.scene-head b { margin-left: 4px; padding-bottom: 2px; }
.scene-section { display: flex; align-items: center; height: 72px; border-top: 2px solid #e4e4e4; padding: 0 24px 2px 16px; }
.scene-section b { padding-bottom: 1px; }
.scene-section.gap { margin-top: 16px; }

.chat { position: absolute; left: 2156px; top: 822px; display: flex; align-items: flex-end; }
.chat-avatar { border-radius: 50%; box-shadow: 0 2px 12px rgba(0, 0, 0, 0.12); }
.chat-card { position: relative; width: 590px; height: 210px; margin-left: 20px; padding: 33px 0 0 44px; border-radius: 18px 18px 18px 0; background: #fff; box-shadow: 0 4px 24px rgba(0, 0, 0, 0.09); font-family: Inter, sans-serif; white-space: nowrap; }
.tail { position: absolute; left: -10px; bottom: 0; }
.from { color: #777; font-size: 26px; line-height: 32px; letter-spacing: -0.250px; }
.msg { color: #000; font-size: 27.300px; line-height: 45px; }
.first-line { margin-top: 22px; }
.second-line { letter-spacing: -0.150px; }
.launcher { position: absolute; left: 2744px; top: 1074px; width: 96px; height: 96px; border-radius: 50%; background: #3276a9; display: flex; align-items: center; justify-content: center; box-shadow: 0 2px 40px rgba(0, 0, 0, 0.16); }
.badge { position: absolute; left: 78px; top: -4px; width: 40px; height: 40px; border: 4px solid #dfdfe1; border-radius: 50%; background: #ed5f57; color: #fff; font: 600 24px/32px Inter, sans-serif; text-align: center; }
</style>
